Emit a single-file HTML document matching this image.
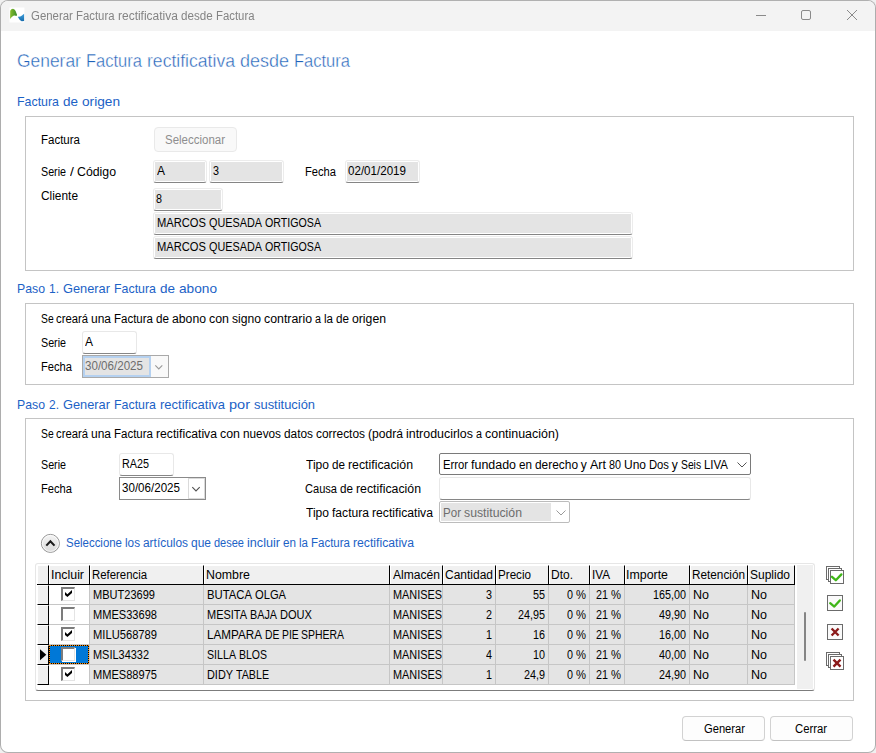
<!DOCTYPE html>
<html lang="es"><head><meta charset="utf-8"><title>Generar Factura rectificativa desde Factura</title>
<style>
html,body{margin:0;padding:0;}
body{width:876px;height:753px;overflow:hidden;position:relative;background:#f0f0f0;font-family:"Liberation Sans", sans-serif;}
#w div,#w span.t,#w svg{position:absolute;box-sizing:border-box;}
#w{position:absolute;left:0;top:0;width:876px;height:753px;overflow:hidden;}
span.t{white-space:pre;line-height:1;transform-origin:0 0;}

.win{left:0;top:0;width:876px;height:753px;border-radius:8px;background:#fff;border:1px solid #b0b0b0;border-right-color:#adadad;border-left-color:#adadad;overflow:hidden;}
.tb{left:1px;top:1px;width:874px;height:30px;background:#f3f3f3;border-radius:7px 7px 0 0;}
.grp{border:1px solid #c4c4c4;background:#fff;}
.ro{border:1px solid #ececec;border-bottom:1px solid #858585;border-radius:3px;background:#fff;}
.ro>i{position:absolute;left:1px;top:1px;right:1px;bottom:1px;background:#e4e4e4;display:block;}
.ed{border:1px solid #e8e8e8;border-bottom:1px solid #868686;border-radius:3px;background:#fff;}
.btn{border:1px solid #d2d2d2;border-bottom-color:#c2c2c2;border-radius:4px;background:#fdfdfd;}
.btnd{border:1px solid #e9e9e9;border-radius:4px;background:#f9f9f9;}
.cb{border:1px solid #7a7a7a;border-radius:2px;background:#fff;}
.cbd{border:1px solid #bcbcbc;border-radius:2px;background:#fff;}
.hd{background:#f0f0f0;border-right:1px solid #000;border-left:1px solid #fff;border-top:1px solid #fff;}
.cell{background:#e4e4e4;border-right:1px solid #c6c6c6;border-bottom:1px solid #c6c6c6;}
.cellw{background:#fff;border-right:1px solid #c6c6c6;border-bottom:1px solid #c6c6c6;}
.rh{background:#f0f0f0;border-right:1px solid #000;border-bottom:1px solid #000;border-left:1px solid #fff;border-top:1px solid #fff;}
.chk{background:#fff;border-top:2px solid #7c7c7c;border-left:2px solid #7c7c7c;border-right:1px solid #e4e4e4;border-bottom:1px solid #e4e4e4;box-shadow:1px 1px 0 #fff;}

</style></head><body><div id="w">
<div class="win"></div>
<div class="tb"></div>
<div class="grp" style="left:25px;top:116px;width:829px;height:155px"></div>
<div class="btnd" style="left:154px;top:127px;width:83px;height:25px"></div>
<div class="ro" style="left:153px;top:160px;width:54px;height:23px"><i></i></div>
<div class="ro" style="left:209px;top:160px;width:75px;height:23px"><i></i></div>
<div class="ro" style="left:345px;top:160px;width:75px;height:23px"><i></i></div>
<div class="ro" style="left:153px;top:188px;width:70px;height:23px"><i></i></div>
<div class="ro" style="left:153px;top:212px;width:480px;height:23px"><i></i></div>
<div class="ro" style="left:153px;top:236px;width:480px;height:23px"><i></i></div>
<div class="grp" style="left:25px;top:303px;width:829px;height:82px"></div>
<div class="ed" style="left:82px;top:331px;width:55px;height:23px"></div>
<div style="left:82px;top:355px;width:87px;height:23px;border:1px solid #a9a9a9;background:#f9f9f9"></div>
<div style="left:83px;top:356px;width:68px;height:21px;border:2px solid #b5d1f0;background:#e4e4e4"></div>
<div class="grp" style="left:25px;top:418px;width:829px;height:283px"></div>
<div class="ed" style="left:119px;top:453px;width:55px;height:23px"></div>
<div style="left:119px;top:477px;width:87px;height:23px;border:1px solid #8a8a8a;background:#fff"></div>
<div style="left:188px;top:478px;width:17px;height:21px;border:1px solid #dadada;background:#fff"></div>
<div class="cb" style="left:439px;top:453px;width:312px;height:22px"></div>
<div class="ed" style="left:439px;top:477px;width:312px;height:23px"></div>
<div class="cbd" style="left:439px;top:501px;width:131px;height:22px"></div>
<div style="left:441px;top:503px;width:110px;height:18px;background:#e4e4e4"></div>
<div style="left:35px;top:563px;width:780px;height:128px;background:#fff;border:1px solid #e6e6e6;border-bottom:1px solid #7c7c7c;border-radius:3px"></div>
<div style="left:797px;top:565px;width:16px;height:124px;background:#f0f0f0"></div>
<div style="left:804px;top:612px;width:2px;height:49px;background:#858585;border-radius:1px"></div>
<div style="left:37px;top:565px;width:758px;height:20px;background:#f0f0f0;border-bottom:1px solid #000"></div>
<div class="hd" style="left:37px;top:565px;width:12px;height:19px"></div>
<div class="hd" style="left:49px;top:565px;width:41px;height:19px"></div>
<div class="hd" style="left:90px;top:565px;width:114px;height:19px"></div>
<div class="hd" style="left:204px;top:565px;width:186px;height:19px"></div>
<div class="hd" style="left:390px;top:565px;width:53px;height:19px"></div>
<div class="hd" style="left:443px;top:565px;width:53px;height:19px"></div>
<div class="hd" style="left:496px;top:565px;width:53px;height:19px"></div>
<div class="hd" style="left:549px;top:565px;width:41px;height:19px"></div>
<div class="hd" style="left:590px;top:565px;width:35px;height:19px"></div>
<div class="hd" style="left:625px;top:565px;width:65px;height:19px"></div>
<div class="hd" style="left:690px;top:565px;width:58px;height:19px"></div>
<div class="hd" style="left:748px;top:565px;width:47px;height:19px"></div>
<div class="rh" style="left:37px;top:585px;width:12px;height:20px"></div>
<div class="cellw" style="left:49px;top:585px;width:41px;height:20px"></div>
<div class="cell" style="left:90px;top:585px;width:114px;height:20px"></div>
<div class="cell" style="left:204px;top:585px;width:186px;height:20px"></div>
<div class="cell" style="left:390px;top:585px;width:53px;height:20px"></div>
<div class="cell" style="left:443px;top:585px;width:53px;height:20px"></div>
<div class="cell" style="left:496px;top:585px;width:53px;height:20px"></div>
<div class="cell" style="left:549px;top:585px;width:41px;height:20px"></div>
<div class="cell" style="left:590px;top:585px;width:35px;height:20px"></div>
<div class="cell" style="left:625px;top:585px;width:65px;height:20px"></div>
<div class="cell" style="left:690px;top:585px;width:58px;height:20px"></div>
<div class="cell" style="left:748px;top:585px;width:47px;height:20px"></div>
<div class="chk" style="left:61px;top:587px;width:14px;height:14px"></div>
<div class="rh" style="left:37px;top:605px;width:12px;height:20px"></div>
<div class="cellw" style="left:49px;top:605px;width:41px;height:20px"></div>
<div class="cell" style="left:90px;top:605px;width:114px;height:20px"></div>
<div class="cell" style="left:204px;top:605px;width:186px;height:20px"></div>
<div class="cell" style="left:390px;top:605px;width:53px;height:20px"></div>
<div class="cell" style="left:443px;top:605px;width:53px;height:20px"></div>
<div class="cell" style="left:496px;top:605px;width:53px;height:20px"></div>
<div class="cell" style="left:549px;top:605px;width:41px;height:20px"></div>
<div class="cell" style="left:590px;top:605px;width:35px;height:20px"></div>
<div class="cell" style="left:625px;top:605px;width:65px;height:20px"></div>
<div class="cell" style="left:690px;top:605px;width:58px;height:20px"></div>
<div class="cell" style="left:748px;top:605px;width:47px;height:20px"></div>
<div class="chk" style="left:61px;top:607px;width:14px;height:14px"></div>
<div class="rh" style="left:37px;top:625px;width:12px;height:20px"></div>
<div class="cellw" style="left:49px;top:625px;width:41px;height:20px"></div>
<div class="cell" style="left:90px;top:625px;width:114px;height:20px"></div>
<div class="cell" style="left:204px;top:625px;width:186px;height:20px"></div>
<div class="cell" style="left:390px;top:625px;width:53px;height:20px"></div>
<div class="cell" style="left:443px;top:625px;width:53px;height:20px"></div>
<div class="cell" style="left:496px;top:625px;width:53px;height:20px"></div>
<div class="cell" style="left:549px;top:625px;width:41px;height:20px"></div>
<div class="cell" style="left:590px;top:625px;width:35px;height:20px"></div>
<div class="cell" style="left:625px;top:625px;width:65px;height:20px"></div>
<div class="cell" style="left:690px;top:625px;width:58px;height:20px"></div>
<div class="cell" style="left:748px;top:625px;width:47px;height:20px"></div>
<div class="chk" style="left:61px;top:627px;width:14px;height:14px"></div>
<div class="rh" style="left:37px;top:645px;width:12px;height:20px"></div>
<div class="cellw" style="left:49px;top:645px;width:41px;height:20px"></div>
<div class="cell" style="left:90px;top:645px;width:114px;height:20px"></div>
<div class="cell" style="left:204px;top:645px;width:186px;height:20px"></div>
<div class="cell" style="left:390px;top:645px;width:53px;height:20px"></div>
<div class="cell" style="left:443px;top:645px;width:53px;height:20px"></div>
<div class="cell" style="left:496px;top:645px;width:53px;height:20px"></div>
<div class="cell" style="left:549px;top:645px;width:41px;height:20px"></div>
<div class="cell" style="left:590px;top:645px;width:35px;height:20px"></div>
<div class="cell" style="left:625px;top:645px;width:65px;height:20px"></div>
<div class="cell" style="left:690px;top:645px;width:58px;height:20px"></div>
<div class="cell" style="left:748px;top:645px;width:47px;height:20px"></div>
<div style="left:49px;top:645px;width:40px;height:19px;background:#000"></div><div style="left:49px;top:645px;width:40px;height:19px;background:#0078d7;background-clip:padding-box;border:1px dotted #ff8c00"></div>
<div class="chk" style="left:61px;top:647px;width:14px;height:14px"></div>
<div class="rh" style="left:37px;top:665px;width:12px;height:20px"></div>
<div class="cellw" style="left:49px;top:665px;width:41px;height:20px"></div>
<div class="cell" style="left:90px;top:665px;width:114px;height:20px"></div>
<div class="cell" style="left:204px;top:665px;width:186px;height:20px"></div>
<div class="cell" style="left:390px;top:665px;width:53px;height:20px"></div>
<div class="cell" style="left:443px;top:665px;width:53px;height:20px"></div>
<div class="cell" style="left:496px;top:665px;width:53px;height:20px"></div>
<div class="cell" style="left:549px;top:665px;width:41px;height:20px"></div>
<div class="cell" style="left:590px;top:665px;width:35px;height:20px"></div>
<div class="cell" style="left:625px;top:665px;width:65px;height:20px"></div>
<div class="cell" style="left:690px;top:665px;width:58px;height:20px"></div>
<div class="cell" style="left:748px;top:665px;width:47px;height:20px"></div>
<div class="chk" style="left:61px;top:667px;width:14px;height:14px"></div>
<div class="btn" style="left:682px;top:716px;width:83px;height:25px"></div>
<div class="btn" style="left:770px;top:716px;width:83px;height:25px"></div>
<span class="t " style="left:17.18px;top:52.26px;font-size:18px;transform:scaleX(0.9675);color:#1e62b9;font-weight:400;-webkit-text-stroke:0.4px #fff">Generar</span>
<span class="t " style="left:85.86px;top:52.26px;font-size:18px;transform:scaleX(0.9176);color:#1e62b9;font-weight:400;-webkit-text-stroke:0.4px #fff">Factura</span>
<span class="t " style="left:146.80px;top:52.26px;font-size:18px;transform:scaleX(0.9774);color:#1e62b9;font-weight:400;-webkit-text-stroke:0.4px #fff">rectificativa</span>
<span class="t " style="left:240.09px;top:52.26px;font-size:18px;transform:scaleX(0.9990);color:#1e62b9;font-weight:400;-webkit-text-stroke:0.4px #fff">desde</span>
<span class="t " style="left:293.86px;top:52.26px;font-size:18px;transform:scaleX(0.9176);color:#1e62b9;font-weight:400;-webkit-text-stroke:0.4px #fff">Factura</span>
<span class="t " style="left:16.93px;top:95.10px;font-size:13px;transform:scaleX(0.9529);color:#1c62c6;font-weight:400">Factura</span>
<span class="t " style="left:62.93px;top:95.10px;font-size:13px;transform:scaleX(1.0367);color:#1c62c6;font-weight:400">de</span>
<span class="t " style="left:81.93px;top:95.10px;font-size:13px;transform:scaleX(1.0514);color:#1c62c6;font-weight:400">origen</span>
<span class="t " style="left:40.99px;top:133.64px;font-size:12px;transform:scaleX(0.9585);color:#000;font-weight:400">Factura</span>
<span class="t " style="left:165.12px;top:133.74px;font-size:12px;transform:scaleX(0.9569);color:#8e8e8e;font-weight:400">Seleccionar</span>
<span class="t " style="left:41.45px;top:165.84px;font-size:12px;transform:scaleX(0.8924);color:#000;font-weight:400">Serie</span>
<span class="t " style="left:70.01px;top:165.84px;font-size:12px;transform:scaleX(1.1600);color:#000;font-weight:400">/</span>
<span class="t " style="left:77.45px;top:165.84px;font-size:12px;transform:scaleX(1.0255);color:#000;font-weight:400">Código</span>
<span class="t " style="left:156.50px;top:165.04px;font-size:12px;transform:scaleX(0.9981);color:#000;font-weight:400">A</span>
<span class="t " style="left:212.50px;top:165.04px;font-size:12px;transform:scaleX(0.8972);color:#000;font-weight:400">3</span>
<span class="t " style="left:304.52px;top:165.84px;font-size:12px;transform:scaleX(0.9293);color:#000;font-weight:400">Fecha</span>
<span class="t " style="left:347.97px;top:165.04px;font-size:12px;transform:scaleX(0.9657);color:#000;font-weight:400">02/01/2019</span>
<span class="t " style="left:41.31px;top:189.64px;font-size:12px;transform:scaleX(0.9904);color:#000;font-weight:400">Cliente</span>
<span class="t " style="left:156.35px;top:192.74px;font-size:12px;transform:scaleX(0.8972);color:#000;font-weight:400">8</span>
<span class="t " style="left:156.52px;top:216.64px;font-size:12px;transform:scaleX(0.9303);color:#000;font-weight:400">MARCOS</span>
<span class="t " style="left:208.52px;top:216.64px;font-size:12px;transform:scaleX(0.9031);color:#000;font-weight:400">QUESADA</span>
<span class="t " style="left:264.52px;top:216.64px;font-size:12px;transform:scaleX(0.8871);color:#000;font-weight:400">ORTIGOSA</span>
<span class="t " style="left:156.52px;top:240.64px;font-size:12px;transform:scaleX(0.9303);color:#000;font-weight:400">MARCOS</span>
<span class="t " style="left:208.52px;top:240.64px;font-size:12px;transform:scaleX(0.9031);color:#000;font-weight:400">QUESADA</span>
<span class="t " style="left:264.52px;top:240.64px;font-size:12px;transform:scaleX(0.8871);color:#000;font-weight:400">ORTIGOSA</span>
<span class="t " style="left:16.94px;top:282.30px;font-size:13px;transform:scaleX(0.9446);color:#1c62c6;font-weight:400">Paso</span>
<span class="t " style="left:48.94px;top:282.30px;font-size:13px;transform:scaleX(0.9222);color:#1c62c6;font-weight:400">1.</span>
<span class="t " style="left:62.94px;top:282.30px;font-size:13px;transform:scaleX(0.9853);color:#1c62c6;font-weight:400">Generar</span>
<span class="t " style="left:113.94px;top:282.30px;font-size:13px;transform:scaleX(0.9529);color:#1c62c6;font-weight:400">Factura</span>
<span class="t " style="left:159.94px;top:282.30px;font-size:13px;transform:scaleX(1.0367);color:#1c62c6;font-weight:400">de</span>
<span class="t " style="left:178.94px;top:282.30px;font-size:13px;transform:scaleX(1.0510);color:#1c62c6;font-weight:400">abono</span>
<span class="t " style="left:41.18px;top:313.14px;font-size:12px;transform:scaleX(0.8600);color:#000;font-weight:400">Se</span>
<span class="t " style="left:56.49px;top:313.14px;font-size:12px;transform:scaleX(0.9407);color:#000;font-weight:400">creará</span>
<span class="t " style="left:91.49px;top:313.14px;font-size:12px;transform:scaleX(0.9984);color:#000;font-weight:400">una</span>
<span class="t " style="left:114.49px;top:313.14px;font-size:12px;transform:scaleX(0.9585);color:#000;font-weight:400">Factura</span>
<span class="t " style="left:156.49px;top:313.14px;font-size:12px;transform:scaleX(0.9731);color:#000;font-weight:400">de</span>
<span class="t " style="left:172.49px;top:313.14px;font-size:12px;transform:scaleX(1.0187);color:#000;font-weight:400">abono</span>
<span class="t " style="left:209.49px;top:313.14px;font-size:12px;transform:scaleX(1.0331);color:#000;font-weight:400">con</span>
<span class="t " style="left:232.49px;top:313.14px;font-size:12px;transform:scaleX(1.0109);color:#000;font-weight:400">signo</span>
<span class="t " style="left:264.49px;top:313.14px;font-size:12px;transform:scaleX(1.0281);color:#000;font-weight:400">contrario</span>
<span class="t " style="left:315.49px;top:313.14px;font-size:12px;transform:scaleX(0.8972);color:#000;font-weight:400">a</span>
<span class="t " style="left:324.49px;top:313.14px;font-size:12px;transform:scaleX(0.9632);color:#000;font-weight:400">la</span>
<span class="t " style="left:336.49px;top:313.14px;font-size:12px;transform:scaleX(0.9731);color:#000;font-weight:400">de</span>
<span class="t " style="left:352.49px;top:313.14px;font-size:12px;transform:scaleX(1.0192);color:#000;font-weight:400">origen</span>
<span class="t " style="left:41.20px;top:336.89px;font-size:12px;transform:scaleX(0.8924);color:#000;font-weight:400">Serie</span>
<span class="t " style="left:85.40px;top:336.14px;font-size:12px;transform:scaleX(0.9981);color:#000;font-weight:400">A</span>
<span class="t " style="left:40.77px;top:361.14px;font-size:12px;transform:scaleX(0.9293);color:#000;font-weight:400">Fecha</span>
<span class="t " style="left:85.47px;top:360.14px;font-size:12px;transform:scaleX(0.9657);color:#6d6d6d;font-weight:400">30/06/2025</span>
<span class="t " style="left:16.94px;top:398.05px;font-size:13px;transform:scaleX(0.9446);color:#1c62c6;font-weight:400">Paso</span>
<span class="t " style="left:48.94px;top:398.05px;font-size:13px;transform:scaleX(0.9222);color:#1c62c6;font-weight:400">2.</span>
<span class="t " style="left:62.94px;top:398.05px;font-size:13px;transform:scaleX(0.9853);color:#1c62c6;font-weight:400">Generar</span>
<span class="t " style="left:113.94px;top:398.05px;font-size:13px;transform:scaleX(0.9529);color:#1c62c6;font-weight:400">Factura</span>
<span class="t " style="left:159.94px;top:398.05px;font-size:13px;transform:scaleX(0.9995);color:#1c62c6;font-weight:400">rectificativa</span>
<span class="t " style="left:228.94px;top:398.05px;font-size:13px;transform:scaleX(1.1172);color:#1c62c6;font-weight:400">por</span>
<span class="t " style="left:253.94px;top:398.05px;font-size:13px;transform:scaleX(0.9931);color:#1c62c6;font-weight:400">sustitución</span>
<span class="t " style="left:41.18px;top:427.64px;font-size:12px;transform:scaleX(0.8600);color:#000;font-weight:400">Se</span>
<span class="t " style="left:56.49px;top:427.64px;font-size:12px;transform:scaleX(0.9407);color:#000;font-weight:400">creará</span>
<span class="t " style="left:91.49px;top:427.64px;font-size:12px;transform:scaleX(0.9984);color:#000;font-weight:400">una</span>
<span class="t " style="left:114.49px;top:427.64px;font-size:12px;transform:scaleX(0.9585);color:#000;font-weight:400">Factura</span>
<span class="t " style="left:156.49px;top:427.64px;font-size:12px;transform:scaleX(1.0161);color:#000;font-weight:400">rectificativa</span>
<span class="t " style="left:220.49px;top:427.64px;font-size:12px;transform:scaleX(1.0331);color:#000;font-weight:400">con</span>
<span class="t " style="left:243.49px;top:427.64px;font-size:12px;transform:scaleX(0.9818);color:#000;font-weight:400">nuevos</span>
<span class="t " style="left:284.49px;top:427.64px;font-size:12px;transform:scaleX(0.9878);color:#000;font-weight:400">datos</span>
<span class="t " style="left:316.49px;top:427.64px;font-size:12px;transform:scaleX(0.9927);color:#000;font-weight:400">correctos</span>
<span class="t " style="left:368.49px;top:427.64px;font-size:12px;transform:scaleX(1.0090);color:#000;font-weight:400">(podrá</span>
<span class="t " style="left:406.49px;top:427.64px;font-size:12px;transform:scaleX(1.0355);color:#000;font-weight:400">introducirlos</span>
<span class="t " style="left:476.49px;top:427.64px;font-size:12px;transform:scaleX(0.8972);color:#000;font-weight:400">a</span>
<span class="t " style="left:485.49px;top:427.64px;font-size:12px;transform:scaleX(1.0366);color:#000;font-weight:400">continuación)</span>
<span class="t " style="left:41.20px;top:458.89px;font-size:12px;transform:scaleX(0.8924);color:#000;font-weight:400">Serie</span>
<span class="t " style="left:122.35px;top:458.14px;font-size:12px;transform:scaleX(0.8991);color:#000;font-weight:400">RA25</span>
<span class="t " style="left:40.77px;top:483.14px;font-size:12px;transform:scaleX(0.9293);color:#000;font-weight:400">Fecha</span>
<span class="t " style="left:121.97px;top:482.14px;font-size:12px;transform:scaleX(0.9657);color:#000;font-weight:400">30/06/2025</span>
<span class="t " style="left:305.65px;top:458.89px;font-size:12px;transform:scaleX(1.0041);color:#000;font-weight:400">Tipo</span>
<span class="t " style="left:331.65px;top:458.89px;font-size:12px;transform:scaleX(0.9731);color:#000;font-weight:400">de</span>
<span class="t " style="left:347.65px;top:458.89px;font-size:12px;transform:scaleX(1.0259);color:#000;font-weight:400">rectificación</span>
<span class="t " style="left:442.81px;top:459.04px;font-size:12px;transform:scaleX(0.9373);color:#000;font-weight:400">Error</span>
<span class="t " style="left:470.81px;top:459.04px;font-size:12px;transform:scaleX(1.0371);color:#000;font-weight:400">fundado</span>
<span class="t " style="left:518.81px;top:459.04px;font-size:12px;transform:scaleX(0.9731);color:#000;font-weight:400">en</span>
<span class="t " style="left:534.81px;top:459.04px;font-size:12px;transform:scaleX(0.9914);color:#000;font-weight:400">derecho</span>
<span class="t " style="left:580.81px;top:459.04px;font-size:12px;transform:scaleX(1.0000);color:#000;font-weight:400">y</span>
<span class="t " style="left:589.81px;top:459.04px;font-size:12px;transform:scaleX(1.0428);color:#000;font-weight:400">Art</span>
<span class="t " style="left:608.81px;top:459.04px;font-size:12px;transform:scaleX(0.8982);color:#000;font-weight:400">80</span>
<span class="t " style="left:623.81px;top:459.04px;font-size:12px;transform:scaleX(0.9993);color:#000;font-weight:400">Uno</span>
<span class="t " style="left:648.81px;top:459.04px;font-size:12px;transform:scaleX(0.9370);color:#000;font-weight:400">Dos</span>
<span class="t " style="left:671.81px;top:459.04px;font-size:12px;transform:scaleX(1.0000);color:#000;font-weight:400">y</span>
<span class="t " style="left:680.77px;top:459.04px;font-size:12px;transform:scaleX(0.8600);color:#000;font-weight:400">Seis</span>
<span class="t " style="left:703.81px;top:459.04px;font-size:12px;transform:scaleX(0.9552);color:#000;font-weight:400">LIVA</span>
<span class="t " style="left:305.35px;top:482.64px;font-size:12px;transform:scaleX(0.9225);color:#000;font-weight:400">Causa</span>
<span class="t " style="left:340.35px;top:482.64px;font-size:12px;transform:scaleX(0.9731);color:#000;font-weight:400">de</span>
<span class="t " style="left:356.35px;top:482.64px;font-size:12px;transform:scaleX(1.0259);color:#000;font-weight:400">rectificación</span>
<span class="t " style="left:305.65px;top:506.89px;font-size:12px;transform:scaleX(1.0041);color:#000;font-weight:400">Tipo</span>
<span class="t " style="left:331.65px;top:506.89px;font-size:12px;transform:scaleX(1.0085);color:#000;font-weight:400">factura</span>
<span class="t " style="left:371.65px;top:506.89px;font-size:12px;transform:scaleX(1.0161);color:#000;font-weight:400">rectificativa</span>
<span class="t " style="left:442.73px;top:506.89px;font-size:12px;transform:scaleX(0.9632);color:#6d6d6d;font-weight:400">Por</span>
<span class="t " style="left:463.73px;top:506.89px;font-size:12px;transform:scaleX(1.0229);color:#6d6d6d;font-weight:400">sustitución</span>
<span class="t " style="left:65.67px;top:537.14px;font-size:12px;transform:scaleX(0.9537);color:#1c62c6;font-weight:400">Seleccione</span>
<span class="t " style="left:124.67px;top:537.14px;font-size:12px;transform:scaleX(0.9776);color:#1c62c6;font-weight:400">los</span>
<span class="t " style="left:142.67px;top:537.14px;font-size:12px;transform:scaleX(0.9921);color:#1c62c6;font-weight:400">artículos</span>
<span class="t " style="left:190.67px;top:537.14px;font-size:12px;transform:scaleX(0.9984);color:#1c62c6;font-weight:400">que</span>
<span class="t " style="left:213.67px;top:537.14px;font-size:12px;transform:scaleX(0.9173);color:#1c62c6;font-weight:400">desee</span>
<span class="t " style="left:246.67px;top:537.14px;font-size:12px;transform:scaleX(1.0528);color:#1c62c6;font-weight:400">incluir</span>
<span class="t " style="left:282.67px;top:537.14px;font-size:12px;transform:scaleX(0.9731);color:#1c62c6;font-weight:400">en</span>
<span class="t " style="left:298.67px;top:537.14px;font-size:12px;transform:scaleX(0.9632);color:#1c62c6;font-weight:400">la</span>
<span class="t " style="left:310.67px;top:537.14px;font-size:12px;transform:scaleX(0.9585);color:#1c62c6;font-weight:400">Factura</span>
<span class="t " style="left:352.67px;top:537.14px;font-size:12px;transform:scaleX(1.0161);color:#1c62c6;font-weight:400">rectificativa</span>
<span class="t " style="left:50.52px;top:568.89px;font-size:12px;transform:scaleX(1.0307);color:#000;font-weight:400">Incluir</span>
<span class="t " style="left:92.00px;top:568.89px;font-size:12px;transform:scaleX(0.9478);color:#000;font-weight:400">Referencia</span>
<span class="t " style="left:206.17px;top:568.89px;font-size:12px;transform:scaleX(1.0307);color:#000;font-weight:400">Nombre</span>
<span class="t " style="left:392.90px;top:568.89px;font-size:12px;transform:scaleX(1.0067);color:#000;font-weight:400">Almacén</span>
<span class="t " style="left:445.30px;top:568.89px;font-size:12px;transform:scaleX(0.9990);color:#000;font-weight:400">Cantidad</span>
<span class="t " style="left:497.73px;top:568.89px;font-size:12px;transform:scaleX(0.9701);color:#000;font-weight:400">Precio</span>
<span class="t " style="left:550.70px;top:568.89px;font-size:12px;transform:scaleX(0.9993);color:#000;font-weight:400">Dto.</span>
<span class="t " style="left:591.83px;top:568.89px;font-size:12px;transform:scaleX(0.9754);color:#000;font-weight:400">IVA</span>
<span class="t " style="left:626.26px;top:568.89px;font-size:12px;transform:scaleX(1.0323);color:#000;font-weight:400">Importe</span>
<span class="t " style="left:691.97px;top:568.89px;font-size:12px;transform:scaleX(0.9806);color:#000;font-weight:400">Retención</span>
<span class="t " style="left:750.40px;top:568.89px;font-size:12px;transform:scaleX(0.9992);color:#000;font-weight:400">Suplido</span>
<span class="t " style="left:92.78px;top:588.89px;font-size:12px;transform:scaleX(0.9202);color:#000;font-weight:400">MBUT23699</span>
<span class="t " style="left:207.01px;top:588.89px;font-size:12px;transform:scaleX(0.9415);color:#000;font-weight:400">BUTACA</span>
<span class="t " style="left:255.01px;top:588.89px;font-size:12px;transform:scaleX(0.9293);color:#000;font-weight:400">OLGA</span>
<span class="t " style="left:392.79px;top:588.89px;font-size:12px;transform:scaleX(0.9071);color:#000;font-weight:400">MANISES</span>
<span class="t " style="left:486.25px;top:588.89px;font-size:12px;transform:scaleX(0.8972);color:#000;font-weight:400">3</span>
<span class="t " style="left:533.13px;top:588.89px;font-size:12px;transform:scaleX(0.8982);color:#000;font-weight:400">55</span>
<span class="t " style="left:567.00px;top:588.89px;font-size:12px;transform:scaleX(0.8972);color:#000;font-weight:400">0</span>
<span class="t " style="left:576.00px;top:588.89px;font-size:12px;transform:scaleX(0.9370);color:#000;font-weight:400">%</span>
<span class="t " style="left:596.11px;top:588.89px;font-size:12px;transform:scaleX(0.8982);color:#000;font-weight:400">21</span>
<span class="t " style="left:611.11px;top:588.89px;font-size:12px;transform:scaleX(0.9370);color:#000;font-weight:400">%</span>
<span class="t " style="left:653.33px;top:588.89px;font-size:12px;transform:scaleX(0.8991);color:#000;font-weight:400">165,00</span>
<span class="t " style="left:692.66px;top:588.89px;font-size:12px;transform:scaleX(1.0428);color:#000;font-weight:400">No</span>
<span class="t " style="left:750.91px;top:588.89px;font-size:12px;transform:scaleX(1.0428);color:#000;font-weight:400">No</span>
<span class="t " style="left:92.77px;top:608.89px;font-size:12px;transform:scaleX(0.9225);color:#000;font-weight:400">MMES33698</span>
<span class="t " style="left:207.03px;top:608.89px;font-size:12px;transform:scaleX(0.9136);color:#000;font-weight:400">MESITA</span>
<span class="t " style="left:250.03px;top:608.89px;font-size:12px;transform:scaleX(0.8995);color:#000;font-weight:400">BAJA</span>
<span class="t " style="left:280.03px;top:608.89px;font-size:12px;transform:scaleX(0.9229);color:#000;font-weight:400">DOUX</span>
<span class="t " style="left:392.79px;top:608.89px;font-size:12px;transform:scaleX(0.9071);color:#000;font-weight:400">MANISES</span>
<span class="t " style="left:486.11px;top:608.89px;font-size:12px;transform:scaleX(0.8972);color:#000;font-weight:400">2</span>
<span class="t " style="left:518.13px;top:608.89px;font-size:12px;transform:scaleX(0.8991);color:#000;font-weight:400">24,95</span>
<span class="t " style="left:567.00px;top:608.89px;font-size:12px;transform:scaleX(0.8972);color:#000;font-weight:400">0</span>
<span class="t " style="left:576.00px;top:608.89px;font-size:12px;transform:scaleX(0.9370);color:#000;font-weight:400">%</span>
<span class="t " style="left:596.11px;top:608.89px;font-size:12px;transform:scaleX(0.8982);color:#000;font-weight:400">21</span>
<span class="t " style="left:611.11px;top:608.89px;font-size:12px;transform:scaleX(0.9370);color:#000;font-weight:400">%</span>
<span class="t " style="left:659.33px;top:608.89px;font-size:12px;transform:scaleX(0.8991);color:#000;font-weight:400">49,90</span>
<span class="t " style="left:692.66px;top:608.89px;font-size:12px;transform:scaleX(1.0428);color:#000;font-weight:400">No</span>
<span class="t " style="left:750.91px;top:608.89px;font-size:12px;transform:scaleX(1.0428);color:#000;font-weight:400">No</span>
<span class="t " style="left:92.77px;top:628.89px;font-size:12px;transform:scaleX(0.9313);color:#000;font-weight:400">MILU568789</span>
<span class="t " style="left:206.97px;top:628.89px;font-size:12px;transform:scaleX(0.9740);color:#000;font-weight:400">LAMPARA</span>
<span class="t " style="left:264.81px;top:628.89px;font-size:12px;transform:scaleX(0.8600);color:#000;font-weight:400">DE</span>
<span class="t " style="left:281.66px;top:628.89px;font-size:12px;transform:scaleX(0.8600);color:#000;font-weight:400">PIE</span>
<span class="t " style="left:300.97px;top:628.89px;font-size:12px;transform:scaleX(0.8712);color:#000;font-weight:400">SPHERA</span>
<span class="t " style="left:392.79px;top:628.89px;font-size:12px;transform:scaleX(0.9071);color:#000;font-weight:400">MANISES</span>
<span class="t " style="left:485.84px;top:628.89px;font-size:12px;transform:scaleX(0.8972);color:#000;font-weight:400">1</span>
<span class="t " style="left:533.17px;top:628.89px;font-size:12px;transform:scaleX(0.8982);color:#000;font-weight:400">16</span>
<span class="t " style="left:567.00px;top:628.89px;font-size:12px;transform:scaleX(0.8972);color:#000;font-weight:400">0</span>
<span class="t " style="left:576.00px;top:628.89px;font-size:12px;transform:scaleX(0.9370);color:#000;font-weight:400">%</span>
<span class="t " style="left:596.11px;top:628.89px;font-size:12px;transform:scaleX(0.8982);color:#000;font-weight:400">21</span>
<span class="t " style="left:611.11px;top:628.89px;font-size:12px;transform:scaleX(0.9370);color:#000;font-weight:400">%</span>
<span class="t " style="left:659.33px;top:628.89px;font-size:12px;transform:scaleX(0.8991);color:#000;font-weight:400">16,00</span>
<span class="t " style="left:692.66px;top:628.89px;font-size:12px;transform:scaleX(1.0428);color:#000;font-weight:400">No</span>
<span class="t " style="left:750.91px;top:628.89px;font-size:12px;transform:scaleX(1.0428);color:#000;font-weight:400">No</span>
<span class="t " style="left:92.78px;top:648.89px;font-size:12px;transform:scaleX(0.9122);color:#000;font-weight:400">MSIL34332</span>
<span class="t " style="left:207.46px;top:648.89px;font-size:12px;transform:scaleX(0.8868);color:#000;font-weight:400">SILLA</span>
<span class="t " style="left:239.46px;top:648.89px;font-size:12px;transform:scaleX(0.8746);color:#000;font-weight:400">BLOS</span>
<span class="t " style="left:392.79px;top:648.89px;font-size:12px;transform:scaleX(0.9071);color:#000;font-weight:400">MANISES</span>
<span class="t " style="left:486.43px;top:648.89px;font-size:12px;transform:scaleX(0.8972);color:#000;font-weight:400">4</span>
<span class="t " style="left:533.08px;top:648.89px;font-size:12px;transform:scaleX(0.8982);color:#000;font-weight:400">10</span>
<span class="t " style="left:567.00px;top:648.89px;font-size:12px;transform:scaleX(0.8972);color:#000;font-weight:400">0</span>
<span class="t " style="left:576.00px;top:648.89px;font-size:12px;transform:scaleX(0.9370);color:#000;font-weight:400">%</span>
<span class="t " style="left:596.11px;top:648.89px;font-size:12px;transform:scaleX(0.8982);color:#000;font-weight:400">21</span>
<span class="t " style="left:611.11px;top:648.89px;font-size:12px;transform:scaleX(0.9370);color:#000;font-weight:400">%</span>
<span class="t " style="left:659.33px;top:648.89px;font-size:12px;transform:scaleX(0.8991);color:#000;font-weight:400">40,00</span>
<span class="t " style="left:692.66px;top:648.89px;font-size:12px;transform:scaleX(1.0428);color:#000;font-weight:400">No</span>
<span class="t " style="left:750.91px;top:648.89px;font-size:12px;transform:scaleX(1.0428);color:#000;font-weight:400">No</span>
<span class="t " style="left:92.77px;top:668.89px;font-size:12px;transform:scaleX(0.9225);color:#000;font-weight:400">MMES88975</span>
<span class="t " style="left:207.04px;top:668.89px;font-size:12px;transform:scaleX(0.9068);color:#000;font-weight:400">DIDY</span>
<span class="t " style="left:236.04px;top:668.89px;font-size:12px;transform:scaleX(0.8889);color:#000;font-weight:400">TABLE</span>
<span class="t " style="left:392.79px;top:668.89px;font-size:12px;transform:scaleX(0.9071);color:#000;font-weight:400">MANISES</span>
<span class="t " style="left:485.84px;top:668.89px;font-size:12px;transform:scaleX(0.8972);color:#000;font-weight:400">1</span>
<span class="t " style="left:524.17px;top:668.89px;font-size:12px;transform:scaleX(0.8990);color:#000;font-weight:400">24,9</span>
<span class="t " style="left:567.00px;top:668.89px;font-size:12px;transform:scaleX(0.8972);color:#000;font-weight:400">0</span>
<span class="t " style="left:576.00px;top:668.89px;font-size:12px;transform:scaleX(0.9370);color:#000;font-weight:400">%</span>
<span class="t " style="left:596.11px;top:668.89px;font-size:12px;transform:scaleX(0.8982);color:#000;font-weight:400">21</span>
<span class="t " style="left:611.11px;top:668.89px;font-size:12px;transform:scaleX(0.9370);color:#000;font-weight:400">%</span>
<span class="t " style="left:659.33px;top:668.89px;font-size:12px;transform:scaleX(0.8991);color:#000;font-weight:400">24,90</span>
<span class="t " style="left:692.66px;top:668.89px;font-size:12px;transform:scaleX(1.0428);color:#000;font-weight:400">No</span>
<span class="t " style="left:750.91px;top:668.89px;font-size:12px;transform:scaleX(1.0428);color:#000;font-weight:400">No</span>
<span class="t " style="left:703.59px;top:723.14px;font-size:12px;transform:scaleX(0.9312);color:#000;font-weight:400">Generar</span>
<span class="t " style="left:795.09px;top:723.14px;font-size:12px;transform:scaleX(0.9407);color:#000;font-weight:400">Cerrar</span>
<div style="left:0;top:0;width:876px;height:31px;will-change:transform"><span class="t " style="left:31.23px;top:9.94px;font-size:12px;transform:scaleX(0.9513);color:#848484;font-weight:400">Generar</span>
<span class="t " style="left:76.39px;top:9.94px;font-size:12px;transform:scaleX(0.9466);color:#848484;font-weight:400">Factura</span>
<span class="t " style="left:118.18px;top:9.94px;font-size:12px;transform:scaleX(0.9979);color:#848484;font-weight:400">rectificativa</span>
<span class="t " style="left:181.36px;top:9.94px;font-size:12px;transform:scaleX(0.9686);color:#848484;font-weight:400">desde</span>
<span class="t " style="left:216.31px;top:9.94px;font-size:12px;transform:scaleX(0.9466);color:#848484;font-weight:400">Factura</span></div>
<svg style="left:154px;top:361px" width="12" height="10" viewBox="0 0 12 10"><path d="M1.3 4.3 L4.8 7.9 L8.3 4.3" fill="none" stroke="#9a9a9a" stroke-width="1.1"/></svg>
<svg style="left:190px;top:483px" width="12" height="10" viewBox="0 0 12 10"><path d="M2.3 4.2 L6 7.9 L9.7 4.2" fill="none" stroke="#505050" stroke-width="1.1"/></svg>
<svg style="left:736px;top:460px" width="12" height="10" viewBox="0 0 12 10"><path d="M1.5 2.5 L6 7 L10.5 2.5" fill="none" stroke="#555" stroke-width="1"/></svg>
<svg style="left:555px;top:508px" width="12" height="10" viewBox="0 0 12 10"><path d="M1.5 2.5 L6 7 L10.5 2.5" fill="none" stroke="#9a9a9a" stroke-width="1"/></svg>
<svg style="left:40px;top:533px" width="21" height="21" viewBox="0 0 21 21"><defs><linearGradient id="g1" x1="0" y1="0" x2="0" y2="1"><stop offset="0" stop-color="#f4f4f4"/><stop offset="1" stop-color="#dadada"/></linearGradient></defs><circle cx="10.4" cy="10.4" r="9" fill="url(#g1)" stroke="#949494" stroke-width="1"/><circle cx="10.4" cy="10.4" r="8" fill="none" stroke="#fff" stroke-width="1" opacity="0.8"/><path d="M6.3 12.6 L10.4 8.2 L14.5 12.6" fill="none" stroke="#1c1c1c" stroke-width="2.1"/></svg>
<svg style="left:61px;top:587px" width="15" height="15" viewBox="0 0 15 15"><path d="M4 5 L6.4 7.3 L11 3.1 L11 5.9 L6.4 10 L4 7.9 Z" fill="#000"/></svg>
<svg style="left:61px;top:627px" width="15" height="15" viewBox="0 0 15 15"><path d="M4 5 L6.4 7.3 L11 3.1 L11 5.9 L6.4 10 L4 7.9 Z" fill="#000"/></svg>
<svg style="left:39px;top:649px" width="8" height="12" viewBox="0 0 8 12"><path d="M1 0.2 L7.3 5.7 L1 11.2 Z" fill="#000"/></svg>
<svg style="left:61px;top:667px" width="15" height="15" viewBox="0 0 15 15"><path d="M4 5 L6.4 7.3 L11 3.1 L11 5.9 L6.4 10 L4 7.9 Z" fill="#000"/></svg>
<svg style="left:820px;top:560px" width="30" height="116" viewBox="0 0 30 116"><rect x="6.5" y="6.5" width="13" height="13" fill="#fff" stroke="#6b6b6b" stroke-width="1"/><rect x="8.5" y="8.5" width="13" height="13" fill="#fff" stroke="#6b6b6b" stroke-width="1"/><rect x="10.5" y="10.5" width="13" height="13" fill="#fff" stroke="#6b6b6b" stroke-width="1"/><path d="M12.0 16.8 L15.8 20.2 L21.4 14.4" fill="none" stroke="#3fb618" stroke-width="2.3" stroke-linejoin="round" stroke-linecap="round"/><rect x="7.5" y="35.5" width="15" height="15" fill="#fafafa" stroke="#6b6b6b" stroke-width="1"/><path d="M10.2 43.2 L14.3 46.6 L19.8 40.4" fill="none" stroke="#3fb618" stroke-width="2.3" stroke-linejoin="round" stroke-linecap="round"/><rect x="7.5" y="64.5" width="15" height="15" fill="#fafafa" stroke="#6b6b6b" stroke-width="1"/><path d="M11.600000000000023 68.5 L18.600000000000023 75.5 M18.600000000000023 68.5 L11.600000000000023 75.5" fill="none" stroke="#8b1a1a" stroke-width="2.4"/><rect x="6.5" y="92.5" width="13" height="13" fill="#fff" stroke="#6b6b6b" stroke-width="1"/><rect x="8.5" y="94.5" width="13" height="13" fill="#fff" stroke="#6b6b6b" stroke-width="1"/><rect x="10.5" y="96.5" width="13" height="13" fill="#fff" stroke="#6b6b6b" stroke-width="1"/><path d="M13.5 99.60000000000002 L20.5 106.60000000000002 M20.5 99.60000000000002 L13.5 106.60000000000002" fill="none" stroke="#8b1a1a" stroke-width="2.4"/></svg>
<svg style="left:750px;top:5px" width="115" height="22" viewBox="0 0 115 22"><path d="M6 10.5 H16" stroke="#8a8a8a" stroke-width="1" fill="none"/><rect x="51.5" y="5.5" width="9" height="9" rx="1.5" fill="none" stroke="#8a8a8a" stroke-width="1"/><path d="M97 5 L107 15 M107 5 L97 15" stroke="#8a8a8a" stroke-width="1" fill="none"/></svg>
<svg style="left:9px;top:7px" width="17" height="17" viewBox="0 0 17 17"><defs><linearGradient id="gg" x1="0" y1="0" x2="1" y2="0"><stop offset="0" stop-color="#86bd2a"/><stop offset="1" stop-color="#3a8c2c"/></linearGradient><linearGradient id="gb" x1="0" y1="0" x2="0" y2="1"><stop offset="0" stop-color="#3f9fdc"/><stop offset="1" stop-color="#166bab"/></linearGradient></defs><g transform="translate(0.4,0.5)"><rect width="15" height="15" fill="#fff"/><path d="M0.7 11.5 L0.8 3.2 Q1.8 1.3 3.6 1.35 Q5.3 1.7 6.2 3.6 L7.7 7.4 L7.0 8.4 Q5.3 7.7 4 8.3 Q2.4 9.2 0.7 11.5 Z" fill="url(#gg)"/><path d="M14.7 6.3 L14.7 13.6 L12.3 13.7 Q10 12.6 8.6 9.7 L8.9 9.1 Q10.6 9.3 12.2 8.2 Z" fill="url(#gb)"/></g></svg>
</div></body></html>
